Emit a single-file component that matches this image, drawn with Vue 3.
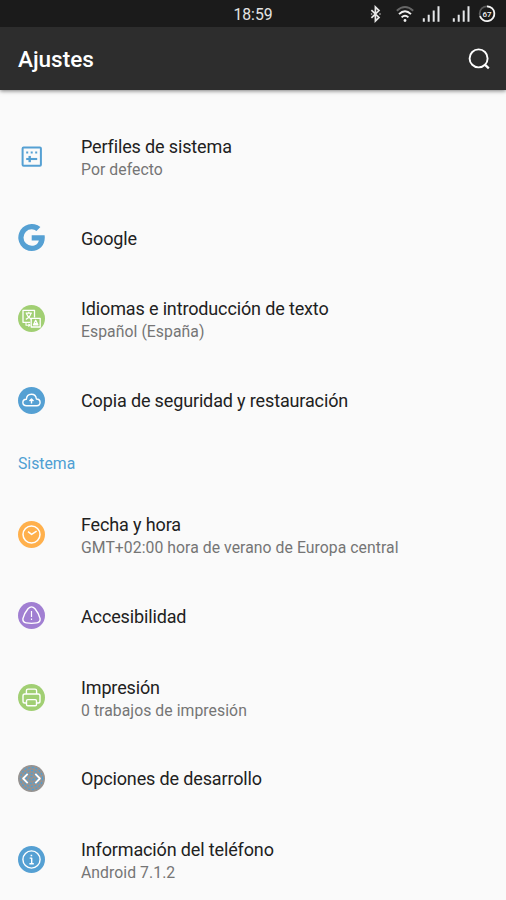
<script setup>
const groups = [
  {
    title: '',
    items: [
      { icon: 'profiles', title: 'Perfiles de sistema', summary: 'Por defecto' },
      { icon: 'google', title: 'Google' },
      { icon: 'language', title: 'Idiomas e introducción de texto', summary: 'Español (España)' },
      { icon: 'backup', title: 'Copia de seguridad y restauración' },
    ],
  },
  {
    title: 'Sistema',
    items: [
      { icon: 'clock', title: 'Fecha y hora', summary: 'GMT+02:00 hora de verano de Europa central' },
      { icon: 'access', title: 'Accesibilidad' },
      { icon: 'print', title: 'Impresión', summary: '0 trabajos de impresión' },
      { icon: 'dev', title: 'Opciones de desarrollo' },
      { icon: 'info', title: 'Información del teléfono', summary: 'Android 7.1.2' },
    ],
  },
]
</script>

<template>
  <div class="screen">
    <header class="top">
      <div class="status">
        <span class="time">18:59</span>
        <div class="tray">
          <svg class="tray-icon bt" viewBox="0 0 18 18">
            <path d="M4.4 5.2 12 12.4 8.4 16V2L12 5.6 4.4 12.8" fill="none" stroke="#e8e8e8" stroke-width="1.7" />
            <path d="M4.6 8.3v1.4M13 8.3v1.4" stroke="#aaa" stroke-width="1.4" />
          </svg>
          <svg class="tray-icon wifi" viewBox="0 0 18 18" fill="none" stroke-width="1.9">
            <path d="M.8 5.7Q9-1.6 17.2 5.7" stroke="#666" />
            <path d="M3 9.1Q9 3.3 15 9.1" stroke="#f0f0f0" />
            <path d="M5.6 12.4Q9 9.2 12.4 12.4" stroke="#f0f0f0" />
            <circle cx="9" cy="15.5" r="1.4" fill="#f0f0f0" />
          </svg>
          <svg v-for="n in 2" :key="n" class="tray-icon" :class="'sim' + n" viewBox="0 0 18 18">
            <path d="M1.8 13.3v3.5M6.7 9.8v7M11.7 5.5v11.3M16.5 1.2v15.6" stroke="#e6e8ea" stroke-width="2" />
          </svg>
          <svg class="tray-icon battery" viewBox="0 0 18 18">
            <circle cx="9" cy="8.7" r="7.4" fill="none" stroke="#5a5a5a" stroke-width="1.7" />
            <path d="M9 1.3A7.4 7.4 0 1 1 2 11.1" fill="none" stroke="#f5f5f5" stroke-width="1.7" />
            <text x="9" y="11.6" text-anchor="middle" class="level">67</text>
          </svg>
        </div>
      </div>
      <div class="bar">
        <h1 class="heading">Ajustes</h1>
        <svg class="search" viewBox="0 0 24 24" fill="none" stroke="#fff" stroke-width="1.9">
          <circle cx="11.6" cy="11.4" r="9" />
          <path d="m17.6 17.4 4.2 4" stroke-width="2.3" />
        </svg>
      </div>
    </header>

    <main class="list">
      <section v-for="g in groups" :key="g.title">
        <h2 v-if="g.title" class="category">{{ g.title }}</h2>
        <div v-for="item in g.items" :key="item.icon" class="row">
          <svg class="icon" viewBox="0 0 27 27" fill="none" stroke-linejoin="round">
            <g v-if="item.icon === 'profiles'" stroke="#55a0d3">
              <rect x="4.6" y="4.4" width="18.3" height="18.4" rx="1" stroke-width="2" />
              <path d="M8.2 9.4h2M12.7 9.4h2M17.2 9.4h2" stroke-width="2" />
              <path d="M8.2 16h11" stroke-width="2.1" />
              <path d="M11.7 12.9v6.3" stroke-width="2.4" />
            </g>
            <path
              v-else-if="item.icon === 'google'"
              d="M13.7 11.3H26.6Q26.8 12.4 26.8 13.6C26.8 21.6 21.4 27 13.7 27A13.5 13.5 0 1 1 22.4 3.1L18.5 7A8 8 0 0 0 13.7 5.3A8.2 8.2 0 1 0 13.7 21.7C17.5 21.7 20.1 19.7 20.8 16.4H13.7Z"
              fill="#55a0d3"
            />
            <g v-else-if="item.icon === 'language'" stroke="#fff" stroke-width="1.3">
              <circle cx="13.5" cy="13.5" r="13.5" fill="#a1cf73" stroke="none" />
              <path d="M12.2 17.3H5V5.3h11.5v7.2" />
              <path d="M7.7 8.2h6.2M10.8 6.8v1.4M13 8.2Q12 12.7 7.8 14.4M8.5 8.8q1.2 3.5 4.7 5.4" stroke-width="1.2" />
              <rect x="13.2" y="13.3" width="9" height="8.7" />
              <path d="m15.5 19.8 2.2-4.5 2.2 4.5zM16.4 18.6h2.6" />
              <path d="M8 17.5v2.7h4M10.4 18.8l1.7 1.4-1.7 1.4" stroke-width="1.1" />
            </g>
            <g v-else-if="item.icon === 'backup'" stroke="#fff" stroke-width="1.4">
              <circle cx="13.5" cy="13.5" r="13.5" fill="#55a0d3" stroke="none" />
              <path d="M8.6 18.7C3.6 18.7 3.7 12.4 8.4 12.2C8.8 5.6 17.7 5.5 18.4 12C23.3 12.1 23.2 18.7 18.8 18.7Z" />
              <path d="M13.5 16.4v-4M11.5 13.9l2-2 2 2" />
            </g>
            <g v-else-if="item.icon === 'clock'" stroke="#fff" stroke-width="1.5">
              <circle cx="13.5" cy="13.5" r="13.5" fill="#ffb04c" stroke="none" />
              <circle cx="13.5" cy="13.5" r="8.5" />
              <path d="m10 10.6 3.6 2.8 5-3.3" />
            </g>
            <g v-else-if="item.icon === 'access'" stroke="#fff" stroke-width="1.4">
              <circle cx="13.5" cy="13.5" r="13.5" fill="#a17fd2" stroke="none" />
              <path d="M10 6.8Q13.5 3 17 6.8Q20.8 11.4 22.1 16.6Q22.5 20.2 18.7 20.9Q13.5 21.8 8.3 20.9Q4.5 20.2 4.9 16.6Q6.2 11.4 10 6.8Z" />
              <path d="M13.5 9.1v5.8M13.5 16.5v1.5" stroke-width="1.2" />
            </g>
            <g v-else-if="item.icon === 'print'" stroke="#fff" stroke-width="1.4">
              <circle cx="13.5" cy="13.5" r="13.5" fill="#a1cf73" stroke="none" />
              <path d="M8.4 10V6.7q0-1.6 1.6-1.6h7q1.6 0 1.6 1.6V10" />
              <path d="M8.2 19H6.8q-1.8 0-1.8-1.8v-5.3q0-1.9 1.8-1.9h13.4q1.8 0 1.8 1.9v5.3q0 1.8-1.8 1.8h-1.4" />
              <rect x="8.5" y="15.6" width="10" height="6.1" rx="1.3" />
            </g>
            <g v-else-if="item.icon === 'dev'" stroke="#fff" stroke-width="1.8">
              <circle cx="13.5" cy="13.5" r="13.5" fill="#969391" stroke="none" />
              <circle
                v-for="r in [2, 5, 8, 11]"
                :key="r"
                cx="13.5"
                cy="13.5"
                :r="r"
                stroke="#4c9fd6"
                stroke-width="1.3"
                stroke-dasharray="2 1.7"
              />
              <path d="m9.7 8.9-4.6 4.6 4.6 4.6M17.3 8.9l4.6 4.6-4.6 4.6" />
            </g>
            <g v-else stroke="#fff" stroke-width="1.4">
              <circle cx="13.5" cy="13.5" r="13.5" fill="#55a0d3" stroke="none" />
              <circle cx="13.5" cy="13.5" r="8.6" />
              <path d="M11.7 12.1h2v5.5M11.4 17.7h4.4M12.6 9.5h1.6" />
            </g>
          </svg>
          <div class="text">
            <div class="title">{{ item.title }}</div>
            <div v-if="item.summary" class="summary">{{ item.summary }}</div>
          </div>
        </div>
      </section>
    </main>
  </div>
</template>

<style>
body {
  background: #fafafa;
}
</style>

<style scoped>
.screen {
  height: 900px;
  overflow: hidden;
  display: flex;
  flex-direction: column;
  background: #fafafa;
  font-family: Roboto, sans-serif;
}
.top {
  flex: none;
  background: #2d2d2d;
  box-shadow: 0 1px 4px rgba(0, 0, 0, 0.5);
}
.status {
  height: 27px;
  background: #1b1b1b;
  display: grid;
  grid-template-columns: 1fr auto 1fr;
  align-items: center;
}
.time {
  grid-column: 2;
  font-size: 15.75px;
  line-height: 27px;
  padding-top: 1px;
  color: #e4e4e4;
}
.tray {
  display: flex;
  justify-content: flex-end;
  padding-right: 10px;
}
.tray-icon {
  width: 18px;
  height: 18px;
  flex: none;
}
.bt {
  margin-right: 11.5px;
}
.wifi {
  margin-right: 8.3px;
}
.sim1 {
  margin-right: 11.2px;
}
.sim2 {
  margin-right: 8.5px;
}
.level {
  font-size: 8px;
  font-weight: 500;
  fill: #f5f5f5;
}
.bar {
  height: 63px;
  display: flex;
  align-items: center;
  justify-content: space-between;
  padding: 0 15px 0 18px;
}
.heading {
  margin: 0;
  padding-top: 1px;
  font-size: 22.5px;
  font-weight: 500;
  line-height: 28px;
  color: #fff;
}
.search {
  width: 24px;
  height: 24px;
}
.list {
  padding-top: 26px;
}
.category {
  margin: 0;
  height: 53.4px;
  padding: 13.2px 18px 0;
  box-sizing: border-box;
  font-size: 15.75px;
  font-weight: 400;
  line-height: 19px;
  color: #4f9fd3;
}
.row {
  height: 81.2px;
  display: flex;
  align-items: center;
  padding: 0 18px;
}
.icon {
  width: 27px;
  height: 27px;
  flex: none;
  margin-right: 36px;
}
.text {
  padding-top: 2px;
  white-space: nowrap;
}
.title {
  font-size: 18px;
  line-height: 24px;
  letter-spacing: -0.14px;
  color: #212121;
}
.summary {
  font-size: 15.75px;
  line-height: 21px;
  letter-spacing: 0.06px;
  color: #757575;
}
</style>
